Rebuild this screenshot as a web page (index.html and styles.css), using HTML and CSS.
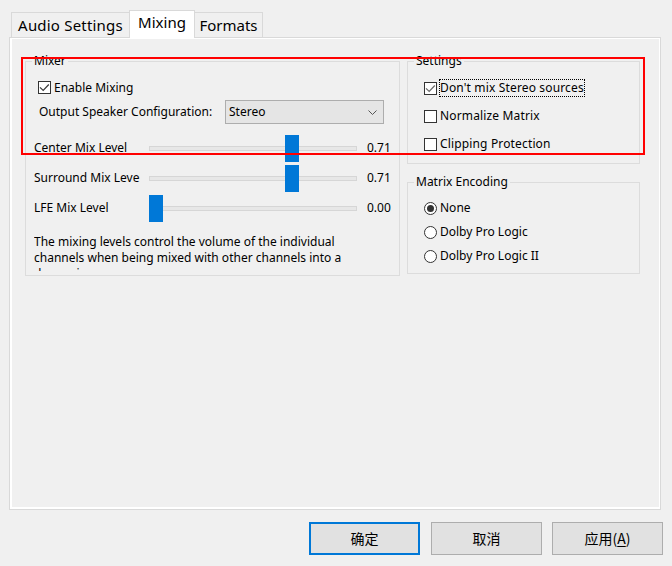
FILE: index.html
```html
<!DOCTYPE html>
<html lang="en">
<head>
<meta charset="utf-8">
<title>Mixing</title>
<link rel="stylesheet" href="styles.css">
</head>
<body>
<div class="window">
  <div class="tabs">
    <div class="tab tab-audio">Audio Settings</div>
    <div class="tab tab-mixing">Mixing</div>
    <div class="tab tab-formats">Formats</div>
  </div>
  <div class="panel">
    <div class="columns">
      <fieldset class="group group-mixer">
        <legend>Mixer</legend>
        <div class="mixer-body">
          <div class="check-row">
            <span class="cb"><svg class="tick" viewBox="0 0 11 11" width="11" height="11"><path d="M1 5.3 L4.2 8.5 L9.8 2.5" fill="none" stroke="#3a3a3a" stroke-width="1.2"/></svg></span>
            <span class="text">Enable Mixing</span>
          </div>
          <div class="config-row">
            <span class="config-label">Output Speaker Configuration:</span>
            <div class="combo">
              <span>Stereo</span>
              <svg class="chev" viewBox="0 0 9 5" width="9" height="5"><path d="M0.5 0.5 L4.5 4.5 L8.5 0.5" fill="none" stroke="#555" stroke-width="1"/></svg>
            </div>
          </div>
          <div class="sliders">
            <div class="slider-row">
              <span class="slider-label">Center Mix Level</span>
              <div class="slider" style="--v:0.70"><div class="track"></div><div class="thumb"></div></div>
              <span class="slider-value">0.71</span>
            </div>
            <div class="slider-row">
              <span class="slider-label">Surround Mix Level</span>
              <div class="slider" style="--v:0.70"><div class="track"></div><div class="thumb"></div></div>
              <span class="slider-value">0.71</span>
            </div>
            <div class="slider-row">
              <span class="slider-label">LFE Mix Level</span>
              <div class="slider" style="--v:0"><div class="track"></div><div class="thumb"></div></div>
              <span class="slider-value">0.00</span>
            </div>
          </div>
          <p class="desc">The mixing levels control the volume of the individual channels when being mixed with other channels into a downmix.</p>
        </div>
      </fieldset>
      <div class="right-col">
        <fieldset class="group group-settings">
          <legend>Settings</legend>
          <div class="opt-body">
            <div class="opt-row">
              <span class="cb"><svg class="tick" viewBox="0 0 11 11" width="11" height="11"><path d="M1 5.3 L4.2 8.5 L9.8 2.5" fill="none" stroke="#6a6a6a" stroke-width="1.2"/></svg></span>
              <span class="opt-label focus">Don't mix Stereo sources</span>
            </div>
            <div class="opt-row">
              <span class="cb"></span>
              <span class="opt-label">Normalize Matrix</span>
            </div>
            <div class="opt-row">
              <span class="cb"></span>
              <span class="opt-label">Clipping Protection</span>
            </div>
          </div>
        </fieldset>
        <fieldset class="group group-matrix">
          <legend>Matrix Encoding</legend>
          <div class="opt-body radio-body">
            <div class="radio-row"><span class="radio on"></span><span class="text">None</span></div>
            <div class="radio-row"><span class="radio"></span><span class="text">Dolby Pro Logic</span></div>
            <div class="radio-row"><span class="radio"></span><span class="text">Dolby Pro Logic II</span></div>
          </div>
        </fieldset>
      </div>
    </div>
  </div>
  <div class="buttons">
    <div class="btn btn-default">确定</div>
    <div class="btn">取消</div>
    <div class="btn btn-apply">应用(<u>A</u>)</div>
  </div>
  <div class="highlight"></div>
</div>
</body>
</html>
```

FILE: styles.css
```css
* { box-sizing: border-box; }
html, body { margin: 0; padding: 0; }
body {
  width: 672px;
  height: 566px;
  background: #f0f0f0;
  font-family: "Noto Sans", "Noto Sans CJK SC", sans-serif;
  font-size: 12px;
  line-height: 16px;
  color: #000;
  overflow: hidden;
}
.window { position: relative; width: 672px; height: 566px; }

/* tabs */
.tabs {
  display: flex;
  align-items: flex-end;
  height: 37px;
  padding-left: 11px;
}
.tab {
  height: 25px;
  border: 1px solid #d9d9d9;
  border-bottom: none;
  background: #f0f0f0;
  font-size: 15px;
  line-height: 20px;
  padding-top: 2px;
  text-align: center;
  white-space: nowrap;
}
.tab + .tab { margin-left: -1px; }
.tab-audio { width: 119px; letter-spacing: 0.2px; }
.tab-mixing {
  width: 66px;
  height: 28px;
  margin-bottom: -1px;
  background: #fff;
  position: relative;
  z-index: 1;
  padding-top: 1px;
}
.tab-formats { width: 69px; }

/* panel */
.panel {
  margin-left: 9px;
  width: 652px;
  height: 473px;
  border: 1px solid #d9d9d9;
  box-shadow: inset 2px 1px 0 #fff, inset -1px -2px 0 #fff;
  padding: 15px 0 0 15px;
}
.columns { display: flex; align-items: flex-start; gap: 7px; }
.right-col { display: flex; flex-direction: column; gap: 10px; }

.group {
  margin: 0;
  padding: 0;
  min-width: 0;
  border: 1px solid #dcdcdc;
}
.group legend {
  margin-left: 6px;
  padding: 0 2px;
  line-height: 16px;
}
.group-mixer { width: 375px; height: 223px; }
.group-settings { width: 233px; height: 111px; }
.group-matrix { width: 233px; height: 100px; }

/* checkbox / radio */
.cb {
  flex: none;
  width: 13px;
  height: 13px;
  border: 1px solid #333;
  background: #fff;
  display: flex;
}
.tick { display: block; }
.radio {
  flex: none;
  width: 13px;
  height: 13px;
  border: 1px solid #333;
  border-radius: 50%;
  background: #fff;
  display: flex;
  align-items: center;
  justify-content: center;
}
.radio.on::after {
  content: "";
  width: 7px;
  height: 7px;
  border-radius: 50%;
  background: #333;
}

/* mixer */
.mixer-body { padding-top: 9px; }
.check-row {
  display: flex;
  align-items: center;
  height: 19px;
  margin-left: 12px;
}
.check-row .text { margin-left: 3px; }
.config-row {
  display: flex;
  align-items: center;
  height: 24px;
  margin-top: 3px;
  margin-left: 13px;
}
.config-label { width: 186px; white-space: nowrap; }
.combo {
  width: 159px;
  height: 24px;
  border: 1px solid #adadad;
  background: #e5e5e5;
  display: flex;
  align-items: center;
  justify-content: space-between;
  padding: 0 6px 0 3px;
}
.chev { display: block; }

.sliders { margin-top: 10px; }
.slider-row {
  display: flex;
  align-items: center;
  height: 30px;
  margin-left: 8px;
}
.slider-label {
  width: 106px;
  margin-right: 9px;
  overflow: hidden;
  white-space: nowrap;
  padding-bottom: 2px;
}
.slider { position: relative; width: 208px; height: 30px; flex: none; }
.track {
  position: absolute;
  left: 0;
  right: 0;
  top: 12px;
  height: 5px;
  background: #e7e7e7;
  border: 1px solid #d6d6d6;
}
.thumb {
  position: absolute;
  top: 1px;
  left: calc(var(--v) * (100% - 14px));
  width: 14px;
  height: 27px;
  background: #0078d7;
}
.slider-value { margin-left: 10px; padding-bottom: 2px; }

.desc {
  margin: 10px 0 0 8px;
  width: 345px;
  height: 37px;
  overflow: hidden;
}

/* right column */
.opt-body { padding: 5px 0 0 16px; }
.radio-body { padding-top: 6px; }
.opt-row { display: flex; align-items: center; height: 28px; }
.opt-label {
  margin-left: 2px;
  border: 1px solid transparent;
  white-space: nowrap;
  letter-spacing: 0.15px;
}
.opt-label.focus { border: 1px dotted #000; }
.radio-row { display: flex; align-items: center; height: 24px; }
.radio-row .text { margin-left: 3px; }

/* buttons */
.buttons {
  display: flex;
  justify-content: flex-end;
  margin-top: 12px;
  padding-right: 9px;
}
.btn {
  width: 111px;
  height: 33px;
  background: #e1e1e1;
  border: 1px solid #adadad;
  font-family: "Noto Sans CJK SC", "Noto Sans", sans-serif;
  font-size: 14px;
  line-height: 20px;
  padding-bottom: 1px;
  display: flex;
  align-items: center;
  justify-content: center;
}
.btn-default { border: 2px solid #0078d7; }
.btn + .btn { margin-left: 11px; }
.btn.btn-apply { margin-left: 10px; }
.btn u { text-underline-offset: 2px; }

/* annotation */
.highlight {
  position: absolute;
  left: 21px;
  top: 57px;
  width: 624px;
  height: 98px;
  border: 2px solid #f00;
  pointer-events: none;
}
```
